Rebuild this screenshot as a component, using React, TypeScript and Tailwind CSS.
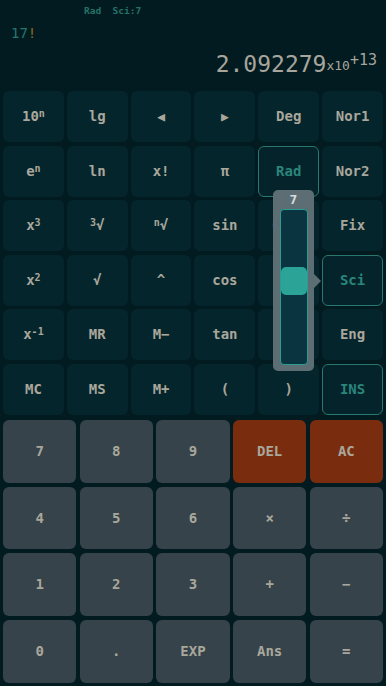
import React from "react";

const mono = { fontFamily: '"DejaVu Sans Mono", "Liberation Mono", monospace' };

type Key = { label: React.ReactNode; active?: boolean };

const sup = "text-[10px] relative -top-[3px]";

const sciKeys: Key[] = [
  { label: <>10<span className={sup}>n</span></> },
  { label: "lg" },
  { label: <span className="text-[13px]">◀</span> },
  { label: <span className="text-[13px]">▶</span> },
  { label: "Deg" },
  { label: "Nor1" },
  { label: <>e<span className={sup}>n</span></> },
  { label: "ln" },
  { label: "x!" },
  { label: "π" },
  { label: "Rad", active: true },
  { label: "Nor2" },
  { label: <>x<span className={sup}>3</span></> },
  { label: <><span className={sup}>3</span>√</> },
  { label: <><span className={sup}>n</span>√</> },
  { label: "sin" },
  { label: "Cnst" },
  { label: "Fix" },
  { label: <>x<span className={sup}>2</span></> },
  { label: "√" },
  { label: "^" },
  { label: "cos" },
  { label: "" },
  { label: "Sci", active: true },
  { label: <>x<span className={sup}>-1</span></> },
  { label: "MR" },
  { label: "M−" },
  { label: "tan" },
  { label: "" },
  { label: "Eng" },
  { label: "MC" },
  { label: "MS" },
  { label: "M+" },
  { label: "(" },
  { label: ")" },
  { label: "INS", active: true },
];

const numKeys: { label: string; red?: boolean }[] = [
  { label: "7" },
  { label: "8" },
  { label: "9" },
  { label: "DEL", red: true },
  { label: "AC", red: true },
  { label: "4" },
  { label: "5" },
  { label: "6" },
  { label: "×" },
  { label: "÷" },
  { label: "1" },
  { label: "2" },
  { label: "3" },
  { label: "+" },
  { label: "−" },
  { label: "0" },
  { label: "." },
  { label: "EXP" },
  { label: "Ans" },
  { label: "=" },
];

export default function App() {
  return (
    <div className="relative w-[386px] h-[686px] bg-[#021b21] overflow-hidden flex flex-col" style={mono}>
      {/* Display */}
      <div className="h-[90px] flex flex-col">
        <div className="pl-[84px] pt-[4px] text-[9.5px] font-bold text-[#257268] whitespace-pre leading-[14px]">
          Rad  Sci:7
        </div>
        <div className="pl-[11px] mt-[6px] text-[14px] leading-[18px] text-[#27766d]">
          17<span className="text-[#8a6a1c]">!</span>
        </div>
        <div className="flex justify-end items-end pr-[9px] mt-[9px] text-[#a7a59c]">
          <span className="text-[23px] leading-[26px]">2.092279</span>
          <span className="text-[13px] leading-[16px] mb-[3px]">x10</span>
          <span className="text-[15px] leading-[16px] self-start mt-[1px]">+13</span>
        </div>
      </div>

      {/* Scientific keys */}
      <div className="grid grid-cols-6 gap-x-[3px] gap-y-[3.5px] px-[3px] mt-[1px]">
        {sciKeys.map((k, i) => (
          <div
            key={i}
            className={`h-[51px] rounded-[6px] flex items-center justify-center text-[14px] font-bold ${
              k.active
                ? "bg-[#04232a] border border-[#28786f] text-[#2a857b]"
                : "bg-[#05252c] text-[#a9a79c]"
            }`}
          >
            {k.label}
          </div>
        ))}
      </div>

      {/* Number pad */}
      <div className="grid grid-cols-5 gap-x-[3.3px] gap-y-[4px] px-[3px] mt-[5.5px]">
        {numKeys.map((k, i) => (
          <div
            key={i}
            className={`h-[62.7px] rounded-[6px] flex items-center justify-center text-[14px] font-bold text-[#a9a79c] ${
              k.red ? "bg-[#7a2d0e]" : "bg-[#36434a]"
            }`}
          >
            {k.label}
          </div>
        ))}
      </div>

      {/* Precision slider popup */}
      <div className="absolute left-[273px] top-[190px] w-[41px] h-[181px] rounded-[5px] bg-[#5c6e73] flex flex-col items-center">
        <div className="text-[13px] font-bold leading-[19px] text-[#d6dcdc]">7</div>
        <div className="relative w-[28px] h-[156px] rounded-[4px] border border-[#2a9c91] bg-[#0a3440]">
          <div className="absolute left-0 right-0 top-[57px] h-[28px] rounded-[5px] bg-[#2ba397]" />
        </div>
        <div className="absolute -right-[7px] top-[84px] w-0 h-0 border-y-[7px] border-y-transparent border-l-[7px] border-l-[#5c6e73]" />
      </div>
    </div>
  );
}
